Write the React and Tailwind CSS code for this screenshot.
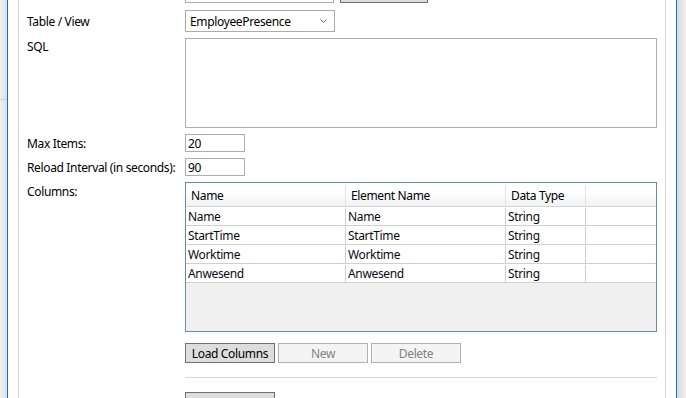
import React from "react";

const rows = [
  ["Name", "Name", "String"],
  ["StartTime", "StartTime", "String"],
  ["Worktime", "Worktime", "String"],
  ["Anwesend", "Anwesend", "String"],
];

function Label({ children, className = "" }) {
  return (
    <div className={`w-[158px] shrink-0 whitespace-nowrap text-black ${className}`}>
      {children}
    </div>
  );
}

export default function App() {
  return (
    <div
      className="flex h-[398px] w-[686px] overflow-hidden bg-white"
      style={{ fontFamily: '"Noto Sans", "Open Sans", sans-serif' }}
    >
      {/* left strip */}
      <div className="flex w-[7px] shrink-0 flex-col bg-gradient-to-r from-[#f0f0f0] to-[#dedede]">
        <div className="h-[100px] border-b border-[#cfcfcf]" />
      </div>
      <div className="w-px shrink-0 bg-[#0078d7]" />
      <div className="w-[10px] shrink-0 bg-white" />
      <div className="w-px shrink-0 bg-[#d4d4d4]" />

      {/* content */}
      <div className="flex w-[646px] shrink-0 flex-col pl-[8px] pr-[8px] text-[12px] leading-[16px] tracking-[-0.35px]">
        {/* row cut off at top */}
        <div className="mt-[-18px] flex h-[21px]">
          <Label />
          <div className="h-[21px] w-[149px] border border-[#abadb3] bg-white" />
          <div className="ml-[6px] h-[21px] w-[88px] border border-[#707070] bg-[#dddddd]" />
        </div>

        {/* Table / View */}
        <div className="mt-[7px] flex h-[22px] items-center">
          <Label className="pt-[1px]">Table / View</Label>
          <div className="flex h-[22px] w-[150px] items-center justify-between border border-[#acacac] bg-white pl-[4px] pr-[6px] pt-[1px]">
            <span className="text-black">EmployeePresence</span>
            <svg width="7" height="5" viewBox="0 0 7 5" className="mb-[1px] mr-[1px]">
              <path d="M0.5 0.5 L3.5 3.5 L6.5 0.5" fill="none" stroke="#606060" strokeWidth="1" />
            </svg>
          </div>
        </div>

        {/* SQL */}
        <div className="mt-[6px] flex">
          <Label className="pt-[1px]">SQL</Label>
          <div className="h-[90px] w-[472px] border border-[#abadb3] bg-white" />
        </div>

        {/* Max Items */}
        <div className="mt-[6px] flex h-[18px] items-center">
          <Label className="pt-[1px]">Max Items:</Label>
          <div className="flex h-[18px] w-[60px] items-center border border-[#abadb3] bg-white pl-[2px] pt-[1px] text-black">
            20
          </div>
        </div>

        {/* Reload Interval */}
        <div className="mt-[6px] flex h-[18px] items-center">
          <Label className="pt-[1px]">Reload Interval (in seconds):</Label>
          <div className="flex h-[18px] w-[60px] items-center border border-[#abadb3] bg-white pl-[2px] pt-[1px] text-black">
            90
          </div>
        </div>

        {/* Columns */}
        <div className="mt-[6px] flex">
          <Label className="pt-[2px]">Columns:</Label>
          <div className="flex flex-col">
            <div className="flex h-[150px] w-[472px] flex-col border border-[#688caf] bg-[#f0f0f0]">
              <div className="flex h-[24px] shrink-0 border-b border-[#d5d5d5] bg-gradient-to-b from-white from-40% to-[#f1f2f4] pt-[2px] text-black">
                <div className="flex w-[160px] items-center border-r border-[#e2e3e5] pl-[5px]">Name</div>
                <div className="flex w-[160px] items-center border-r border-[#e2e3e5] pl-[5px]">Element Name</div>
                <div className="flex w-[80px] items-center border-r border-[#e2e3e5] pl-[5px]">Data Type</div>
                <div className="flex-1" />
              </div>
              {rows.map((r, i) => (
                <div key={i} className="flex h-[19px] shrink-0 border-b border-[#d0d0d0] bg-white pt-[1px] text-[#0a0a14]">
                  <div className="flex w-[160px] items-center border-r border-[#d0d0d0] pl-[2px]">{r[0]}</div>
                  <div className="flex w-[160px] items-center border-r border-[#d0d0d0] pl-[2px]">{r[1]}</div>
                  <div className="flex w-[80px] items-center border-r border-[#d0d0d0] pl-[2px]">{r[2]}</div>
                  <div className="flex-1" />
                </div>
              ))}
            </div>

            <div className="mt-[11px] flex gap-[3px]">
              <div className="flex h-[20px] w-[90px] items-center justify-center border border-[#707070] bg-[#dddddd] pt-[1px] text-black">
                Load Columns
              </div>
              <div className="flex h-[20px] w-[90px] items-center justify-center border border-[#adb2b5] bg-[#f4f4f4] pt-[1px] text-[#838383]">
                New
              </div>
              <div className="flex h-[20px] w-[90px] items-center justify-center border border-[#adb2b5] bg-[#f4f4f4] pt-[1px] text-[#838383]">
                Delete
              </div>
            </div>

            <div className="mt-[14px] h-px w-[472px] bg-[#d4d4d4]" />

            <div className="mt-[14px] h-[21px] w-[90px] border border-[#707070] bg-[#dddddd]" />
          </div>
        </div>
      </div>

      {/* right side */}
      <div className="w-px shrink-0 bg-[#d4d4d4]" />
      <div className="w-[10px] shrink-0 bg-white" />
      <div className="w-px shrink-0 bg-[#0078d7]" />
      <div className="flex-1 bg-gradient-to-r from-[#dadada] to-[#f0f0f0]" />
    </div>
  );
}
